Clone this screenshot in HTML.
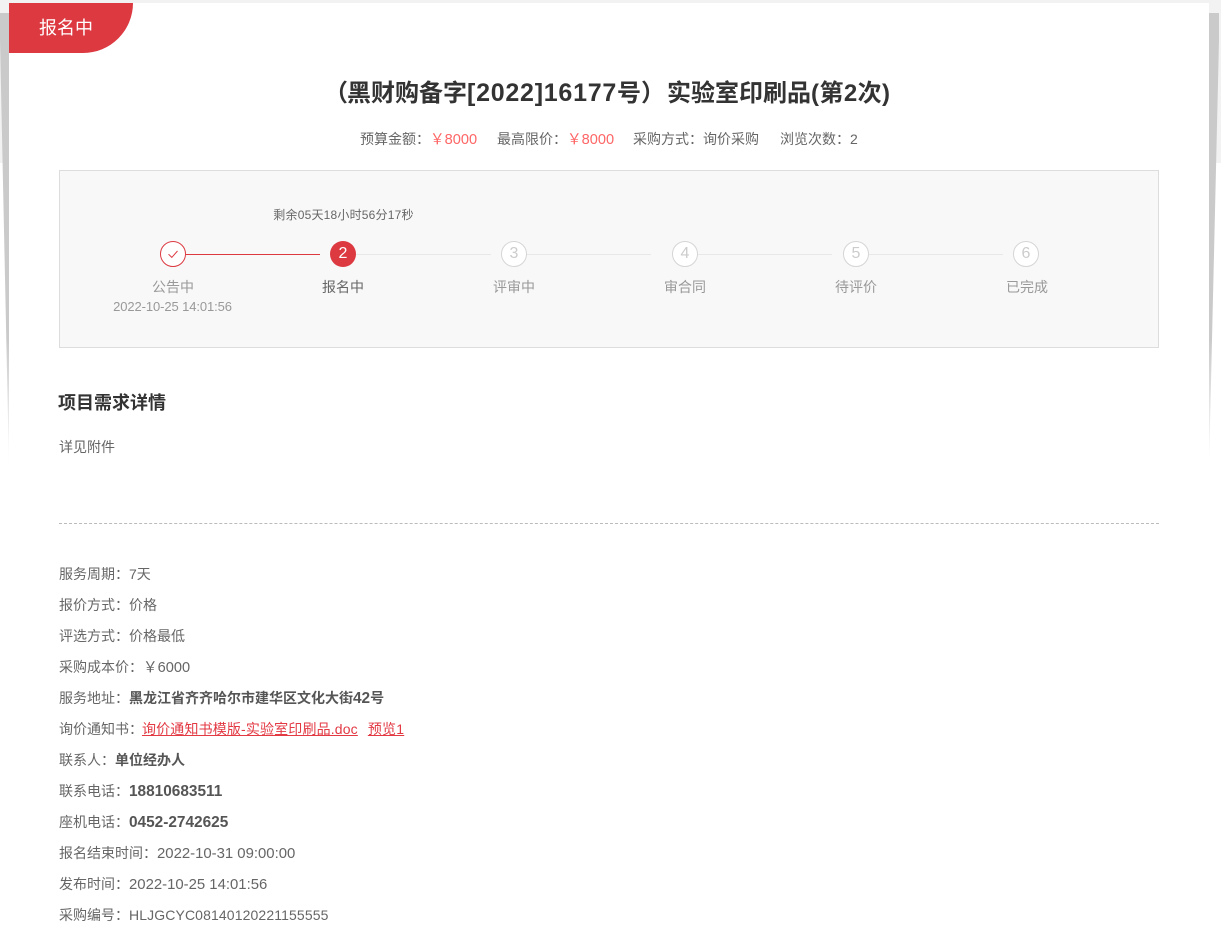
<!DOCTYPE html>
<html lang="zh-CN">
<head>
<meta charset="utf-8">
<title>报名中</title>
<style>
html,body{margin:0;padding:0;background:#fff}
body{position:relative;width:1221px;height:932px;overflow:hidden;font-family:"Liberation Sans","Noto Sans CJK SC",sans-serif;color:#666;font-size:14px}
.t{position:absolute;white-space:nowrap;line-height:20px}
.c{transform:translateX(-50%)}
#page{position:absolute;left:9px;top:3px;width:1200px;height:929px;background:#fff}
#badge{position:absolute;left:9px;top:3px;width:124px;height:50px;background:#dc3941;border-bottom-right-radius:50px;color:#fff;font-size:18px;line-height:50px;text-indent:30px}
#box{position:absolute;left:59px;top:170px;width:1098px;height:176px;background:#f8f8f8;border:1px solid #ddd}
.n{position:absolute;top:241px;width:24px;height:24px;border:1px solid #d5d5d5;border-radius:50%;background:#fff;color:#ccc;text-align:center;line-height:24px;font-size:16px}
.l{position:absolute;top:254px;height:1px;background:#e8e8e8}
.s{color:#999;font-size:14px}
.d{left:59px;font-size:14px;color:#666}
b{color:#555;font-weight:bold}
a{color:#e23943;text-decoration:underline}
.w{font-size:15.4px}
.x{font-size:14.9px}
</style>
</head>
<body>
<svg style="position:absolute;left:0;top:0" width="1221" height="480">
<defs><linearGradient id="g" x1="0" y1="13" x2="0" y2="468" gradientUnits="userSpaceOnUse"><stop offset="0" stop-color="#cacaca"/><stop offset=".72" stop-color="#cacaca"/><stop offset="1" stop-color="#fff"/></linearGradient></defs>
<rect x="0" y="0" width="1221" height="163" fill="#f2f2f2"/>
<polygon points="0,13 9,13 9,468 0,40" fill="url(#g)"/>
<polygon points="1209,13 1219,13 1219,40 1209,468" fill="url(#g)"/>
</svg>
<div id="page"></div>
<div id="badge">报名中</div>
<div class="t" style="left:323px;top:76px;font-size:24px;line-height:34px;font-weight:bold;color:#333"><span style="position:relative;left:1px">（</span>黑财购备字<span style="font-size:25px;letter-spacing:.75px">[2022]16177</span>号）<span style="margin-left:2px">实验室印刷品</span><span style="letter-spacing:.4px">(第2次)</span></div>
<div class="t" style="left:360px;top:129px;color:#666">预算金额：<span style="color:#f66;font-size:14.6px">￥8000</span></div>
<div class="t" style="left:497px;top:129px;color:#666">最高限价：<span style="color:#f66;font-size:14.6px">￥8000</span></div>
<div class="t" style="left:633px;top:129px;color:#666">采购方式：询价采购</div>
<div class="t" style="left:780px;top:129px;color:#666">浏览次数：2</div>

<div id="box"></div>
<div class="t c" style="left:343.500px;top:205px;font-size:12px;color:#666;letter-spacing:.2px">剩余05天18小时56分17秒</div>

<div class="l" style="left:186px;width:134px;background:#dc3941"></div>
<div class="l" style="left:356px;width:135px"></div>
<div class="l" style="left:527px;width:124px"></div>
<div class="l" style="left:698px;width:134px"></div>
<div class="l" style="left:869px;width:134px"></div>

<div class="n" style="left:160px;border-color:#dc3941"></div>
<svg style="position:absolute;left:160px;top:241px" width="26" height="26"><path d="M8.500 13.200 L11.800 16.400 L17.500 10" fill="none" stroke="#dc3941" stroke-width="1"/></svg>
<div class="n" style="left:330px;width:26px;height:26px;border:0;background:#dc3941;color:#fff;line-height:26px">2</div>
<div class="n" style="left:501px">3</div>
<div class="n" style="left:672px">4</div>
<div class="n" style="left:843px">5</div>
<div class="n" style="left:1013px">6</div>

<div class="t c s" style="left:173px;top:277px">公告中</div>
<div class="t c" style="left:172.500px;top:297px;font-size:13px;color:#999;letter-spacing:-.1px">2022-10-25 14:01:56</div>
<div class="t c" style="left:343px;top:277px;color:#666">报名中</div>
<div class="t c s" style="left:514px;top:277px">评审中</div>
<div class="t c s" style="left:685px;top:277px">审合同</div>
<div class="t c s" style="left:856px;top:277px">待评价</div>
<div class="t c s" style="left:1027px;top:277px">已完成</div>

<div class="t" style="left:58px;top:393px;font-size:18px;font-weight:bold;color:#333">项目需求详情</div>
<div class="t d" style="top:437px">详见附件</div>
<div style="position:absolute;left:59px;top:523px;width:1100px;border-top:1px dashed #bbb"></div>

<div class="t d" style="top:564px">服务周期：7天</div>
<div class="t d" style="top:595px">报价方式：价格</div>
<div class="t d" style="top:626px">评选方式：价格最低</div>
<div class="t d" style="top:657px">采购成本价：<span style="font-size:14.6px">￥6000</span></div>
<div class="t d" style="top:688px">服务地址：<b>黑龙江省齐齐哈尔市建华区文化大街<span class="w">42</span>号</b></div>
<div class="t d" style="top:719px">询价通知书：<a style="margin-left:-1px;letter-spacing:.15px">询价通知书模版-实验室印刷品.doc</a><a style="margin-left:10px;letter-spacing:.2px">预览1</a></div>
<div class="t d" style="top:750px">联系人：<b>单位经办人</b></div>
<div class="t d" style="top:781px">联系电话：<b class="w">18810683511</b></div>
<div class="t d" style="top:812px">座机电话：<b class="w">0452-2742625</b></div>
<div class="t d" style="top:843px">报名结束时间：<span class="x">2022-10-31 09:00:00</span></div>
<div class="t d" style="top:874px">发布时间：<span class="x">2022-10-25 14:01:56</span></div>
<div class="t d" style="top:905px">采购编号：<span style="letter-spacing:.12px">HLJGCYC08140120221155555</span></div>
</body>
</html>
